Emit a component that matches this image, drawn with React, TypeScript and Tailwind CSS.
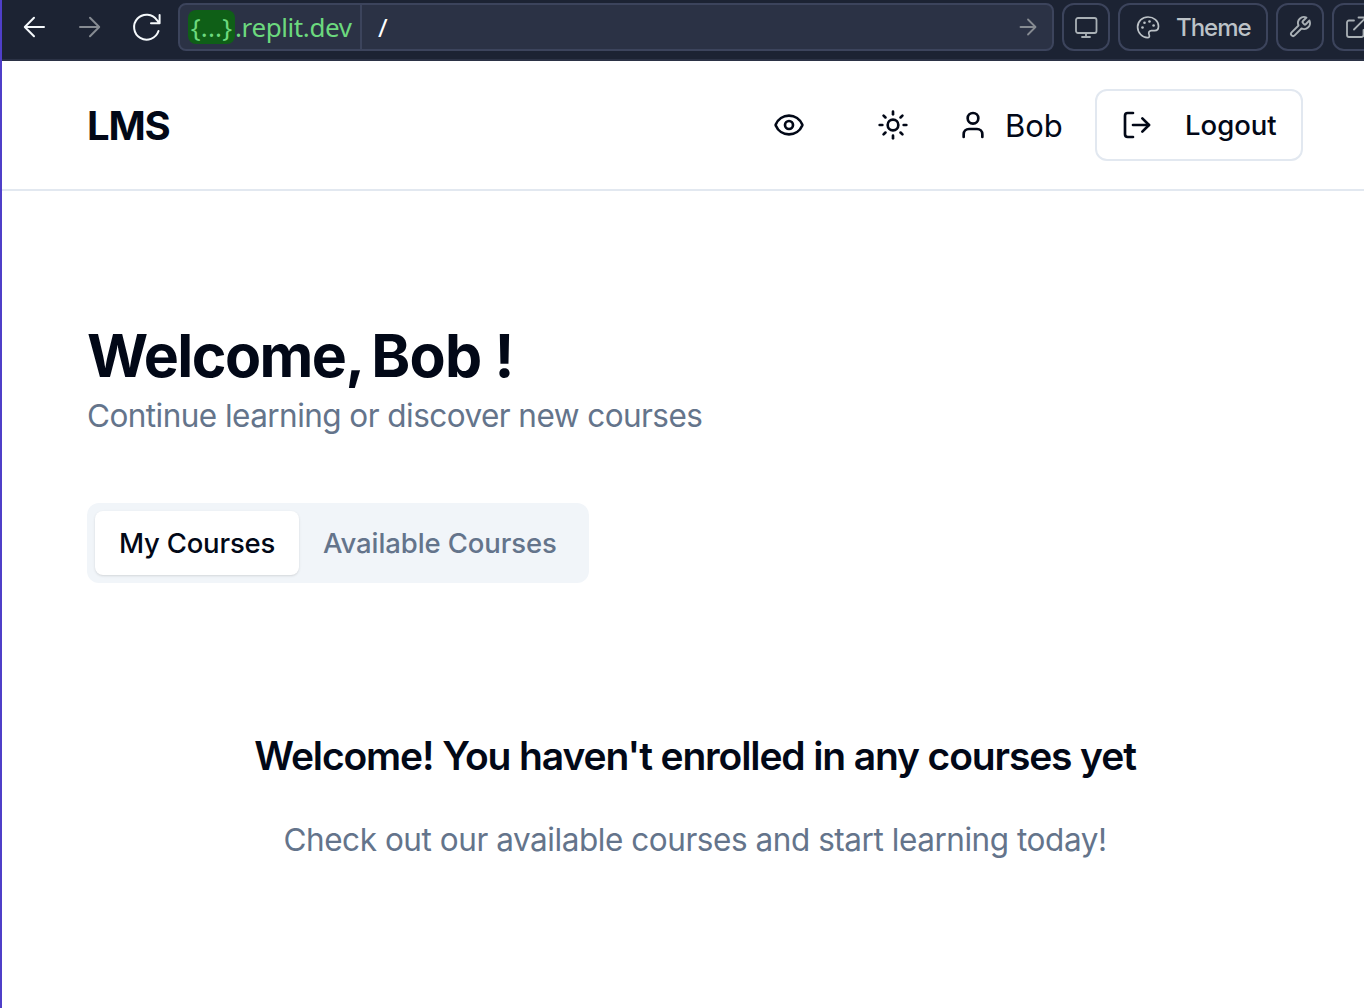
import type { ReactNode } from "react";
import { Eye, LogOut, Sun, User } from "lucide-react";

function Line({ children, className = "" }: { children: ReactNode; className?: string }) {
  return (
    <svg
      viewBox="0 0 32 32"
      className={"size-8 shrink-0 " + className}
      fill="none"
      stroke="currentColor"
      strokeWidth="2"
      strokeLinecap="round"
      strokeLinejoin="round"
    >
      {children}
    </svg>
  );
}

function ToolButton({ children }: { children: ReactNode }) {
  return (
    <button className="flex size-12 shrink-0 items-center justify-center rounded-xl border-2 border-[#3c445c] text-[#a9b0b5]">
      {children}
    </button>
  );
}

function BrowserBar() {
  return (
    <div className="flex h-[61px] items-start overflow-hidden border-b-2 border-[#2b3245] bg-[#1c2333] pt-[3px] font-['Inter',sans-serif]">
      <div className="flex h-12 w-44 shrink-0 items-center gap-6 pl-4 text-[#f5f9fc]">
        <Line>
          <path d="M26 16H7M16 6.800L6.800 16l9.200 9.200" />
        </Line>
        <Line className="text-[#868b92]">
          <path d="M6 16h19M16 6.800L25.200 16l-9.200 9.200" />
        </Line>
        <Line className="ml-px">
          <path d="M27.500 20A12.500 12.500 0 1 1 26 9.200L28.200 12M28.600 4v8.200h-8.600" />
        </Line>
      </div>
      <div className="flex h-12 w-[876px] shrink-0 items-center rounded-lg border-2 border-[#3c445c] bg-[#2b3245] font-['Noto_Sans',sans-serif] text-[26px]">
        <div className="flex h-full w-[182px] shrink-0 items-center whitespace-nowrap border-r-2 border-[#3c445c] pl-2 text-[#6cd97e]">
          <span className="flex h-[34px] w-[47px] items-center justify-center rounded-lg bg-[#0f5f17] tracking-[0.2px]">{"{...}"}</span>
          <span className="tracking-[-0.4px]">.replit.dev</span>
        </div>
        <span className="ml-4 text-white">/</span>
        <Line className="mr-2 ml-auto text-[#868b92]">
          <path strokeWidth="1.800" d="M8.500 16h14.500M16 8.500l7.500 7.500-7.500 7.500" />
        </Line>
      </div>
      <div className="ml-2 flex gap-2">
        <ToolButton>
          <Line>
            <g strokeWidth="1.800">
              <rect x="6" y="7" width="20.500" height="15" rx="2" />
              <path d="M16 22v4M12 26h8" />
            </g>
          </Line>
        </ToolButton>
        <button className="flex h-12 w-[150px] shrink-0 items-center rounded-xl border-2 border-[#3c445c] pl-3 text-[#bcc2c7]">
          <Line>
            <g strokeWidth="1.700">
              <path d="M16 6C10.200 6 5.600 10.400 5.600 16c0 5.800 4.800 10.600 9.800 10.600 2 0 2.400-1.200 1.700-2.900-1-2.300.2-4.100 2.300-4.100h3.200c2.700 0 3.900-1.500 3.900-4.400C26.500 9.800 21.700 6 16 6Z" />
            </g>
            <g fill="currentColor" stroke="none">
              <circle cx="10.500" cy="16.500" r="1.300" />
              <circle cx="12.500" cy="11.800" r="1.300" />
              <circle cx="17.500" cy="10.500" r="1.300" />
              <circle cx="21.600" cy="14.500" r="1.300" />
            </g>
          </Line>
          <span className="ml-3 pt-0.5 text-[24px] font-medium tracking-[-1px]">Theme</span>
        </button>
        <ToolButton>
          <Line>
            <path
              strokeWidth="1.900"
              transform="translate(4 4)"
              d="M14.700 6.300a1 1 0 0 0 0 1.400l1.600 1.600a1 1 0 0 0 1.400 0l3.770-3.770a6 6 0 0 1-7.940 7.940l-6.910 6.910a2.120 2.120 0 0 1-3-3l6.910-6.910a6 6 0 0 1 7.940-7.940l-3.760 3.760z"
            />
          </Line>
        </ToolButton>
        <ToolButton>
          <Line>
            <path strokeWidth="1.800" d="M14 9.500H9a2 2 0 0 0-2 2V24a2 2 0 0 0 2 2h12.500a2 2 0 0 0 2-2v-5M14 18.500L26 6.500M18.500 6.500H26.500v8" />
          </Line>
        </ToolButton>
      </div>
    </div>
  );
}

function Header() {
  return (
    <header className="flex h-[130px] items-center border-b-2 border-[#e2e8f0] pr-[61px] pl-[85px]">
      <h1 className="pt-0.5 text-[40px] font-bold tracking-[-1.2px]">LMS</h1>
      <div className="ml-auto flex items-center">
        <Eye className="mr-18 size-8" />
        <Sun className="mr-12 size-8" />
        <User className="mr-4 size-8" />
        <span className="w-[90px] pt-0.5 text-[31px] tracking-[-0.1px]">Bob</span>
        <button className="flex h-[72px] w-[208px] items-center rounded-xl border-2 border-[#e2e8f0] pl-6">
          <LogOut className="size-8" />
          <span className="ml-8 pt-0.5 text-[27.500px] font-medium">Logout</span>
        </button>
      </div>
    </header>
  );
}

export default function App() {
  return (
    <div className="h-[1008px] w-[1364px] overflow-hidden border-l-2 border-[#4f3fc8] bg-white font-['Inter',sans-serif] text-[#020817]">
      <BrowserBar />
      <Header />
      <main className="pt-32 pr-[61px] pl-[85px]">
        <h2 className="h-[72px] text-[59px] leading-[74px] font-bold tracking-[-1.55px] whitespace-nowrap">
          Welcome, <span className="-ml-[3px] tracking-[-0.75px]">Bob !</span>
        </h2>
        <p className="h-12 text-[31.500px] leading-[50px] tracking-[-0.55px] whitespace-nowrap text-[#64748b]">Continue learning or discover new courses</p>
        <div className="mt-16 flex h-20 w-[502px] rounded-xl bg-[#f1f5f9] p-2 text-[27.500px] font-medium whitespace-nowrap">
          <button className="h-16 w-[204px] rounded-lg bg-white pt-0.5 tracking-[-0.2px] shadow-sm">My Courses</button>
          <button className="ml-6 pt-0.5 tracking-[-0.1px] text-[#64748b]">Available Courses</button>
        </div>
        <section className="mt-36 flex flex-col items-center whitespace-nowrap">
          <h3 className="h-14 text-[39px] leading-[58px] font-semibold tracking-[-1.13px]">Welcome! You haven't enrolled in any courses yet</h3>
          <p className="mt-8 h-12 text-[31.500px] leading-[50px] tracking-[-0.45px] text-[#64748b]">Check out our available courses and start learning today!</p>
        </section>
      </main>
    </div>
  );
}
